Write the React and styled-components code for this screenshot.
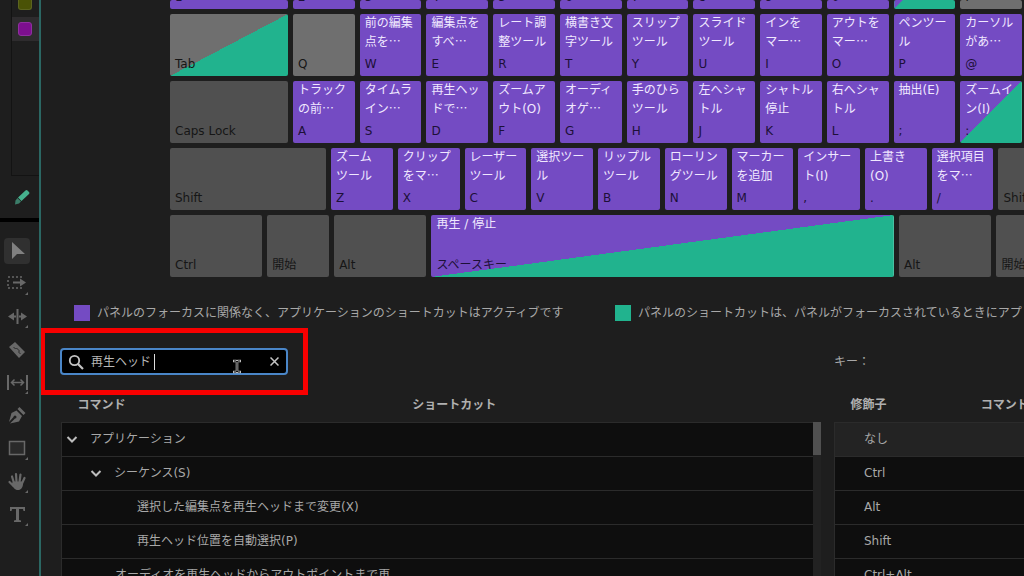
import React from "react";
import styled, { createGlobalStyle, css } from "styled-components";

const color = {
  bg: "#1e1e1e",
  purple: "#744bc3",
  teal: "#21b38e",
  assigned: "#6f6f6f",
  modifier: "#505050",
  text: "#a8a8a8",
  line: "#2b2b2b",
  well: "#0e0e0e",
};

const Global = createGlobalStyle`
  * { box-sizing: border-box; }
  body {
    margin: 0;
    background: ${color.bg};
    color: ${color.text};
    font: 12px/18px "DejaVu Sans", "Noto Sans CJK JP", sans-serif;
  }
  button, input { font: inherit; color: inherit; }
`;

const Page = styled.div`
  display: flex;
  height: 100vh;
  overflow: hidden;
`;

/* ---------- side bar ---------- */

const Side = styled.aside`
  flex: none;
  width: 41px;
  border-right: 2px solid #2b6763;
  display: flex;
  flex-direction: column;
`;

const LabelPanel = styled.div`
  height: 176px;
  margin-left: 11px;
  border: solid #131313;
  border-width: 0 0 1px 1px;
`;

const LabelRow = styled.div`
  height: ${(p) => (p.$selected ? 24 : 17)}px;
  display: flex;
  align-items: ${(p) => (p.$selected ? "center" : "flex-start")};
  padding-left: 6px;
  overflow: hidden;
  background: ${(p) => (p.$selected ? "#2e2c2e" : "transparent")};
`;

const LabelSwatch = styled.span`
  width: 14px;
  height: ${(p) => p.$height}px;
  border: 1px solid ${(p) => p.$edge};
  border-top-width: ${(p) => (p.$height < 14 ? 0 : 1)}px;
  border-radius: ${(p) => (p.$height < 14 ? "0 0 3px 3px" : "3px")};
  background: ${(p) => p.$fill};
`;

const PencilSlot = styled.div`
  height: 42px;
  display: flex;
  align-items: center;
  padding-left: 14px;
`;

const Tools = styled.nav`
  flex: 1;
  border-top: 4px solid #000;
  padding: 16px 4px 0;
  display: flex;
  flex-direction: column;
  gap: 7px;
`;

const ToolButton = styled.button`
  flex: none;
  width: 26px;
  height: 26px;
  padding: 0;
  border: 0;
  border-radius: 4px;
  display: grid;
  place-items: center;
  color: ${(p) => (p.$active ? "#808080" : "#686868")};
  background: ${(p) => (p.$active ? "#303030" : "transparent")};
`;

const Corner = () => <path d="M24 21v3h-3z" fill="currentColor" />;

const tools = [
  { name: "選択ツール", art: <path d="M8 4v17l5-5h8z" fill="currentColor" /> },
  {
    name: "トラックの前方選択ツール",
    art: (
      <>
        <path d="M4 6h2M8 6h2M12 6h2M16 6h2M4 17h2M8 17h2M12 17h2M16 17h2M4 9v2M4 13v2" stroke="currentColor" strokeWidth="1.500" />
        <path d="M9 10.500h7V7.500l6 4-6 4v-3H9z" fill="currentColor" />
        <Corner />
      </>
    ),
  },
  {
    name: "リップルツール",
    art: (
      <>
        <path d="M13.500 5v15" stroke="currentColor" strokeWidth="2" />
        <path d="M4 12.500l6-4v3h2v2h-2v3zM23 12.500l-6-4v3h-2v2h2v3z" fill="currentColor" />
        <Corner />
      </>
    ),
  },
  {
    name: "レーザーツール",
    art: (
      <>
        <path d="M5 10l6-5 10 10-6 6z" fill="currentColor" />
        <path d="M9.500 10l2 2 1-1 3 3-1 1 2 2" stroke="#2a2a2a" fill="none" />
      </>
    ),
  },
  {
    name: "スリップツール",
    art: (
      <>
        <path d="M4 5v15M23 5v15" stroke="currentColor" strokeWidth="2" />
        <path d="M8 12.500h11M10.500 9.500l-3 3 3 3M16.500 9.500l3 3-3 3" stroke="currentColor" strokeWidth="1.500" fill="none" />
        <Corner />
      </>
    ),
  },
  {
    name: "ペンツール",
    art: (
      <path
        d="M15.500 4l6 6-2 2-6-6zM12.500 7.500l5.500 5.500-3 5.500L6 20.500l5-5a1.500 1.500 0 1 0-1.500-1.500L5 19l2.500-9z"
        fill="currentColor"
      />
    ),
  },
  {
    name: "長方形ツール",
    art: (
      <>
        <path d="M5.500 5.500h15v13h-15z" stroke="currentColor" strokeWidth="1.500" fill="#2a2a2a" />
        <Corner />
      </>
    ),
  },
  {
    name: "手のひらツール",
    art: (
      <>
        <path
          d="M10 14L8 7.500M12.500 13L12 5M15.500 13L16.500 5.500M18 14.500L20.500 9M9.500 17L5.500 13"
          stroke="currentColor"
          strokeWidth="2.200"
          strokeLinecap="round"
        />
        <path d="M9 12.500h9.500l.5 2c0 4-2 6.500-5 6.500-3 0-4-1.500-6.500-5.500z" fill="currentColor" />
        <Corner />
      </>
    ),
  },
  {
    name: "文字ツール",
    art: (
      <>
        <path d="M6 5h15v4h-1.500l-.5-2h-4v11l2 .5V20h-7v-1.500l2-.5V7H8l-.5 2H6z" fill="currentColor" />
        <Corner />
      </>
    ),
  },
];

/* ---------- keyboard ---------- */

const Dialog = styled.main`
  flex: 1;
  min-width: 0;
  overflow: hidden;
`;

const Keyboard = styled.div`
  margin-left: 129px;
  min-width: 996px;
  display: flex;
  flex-direction: column;
  gap: 5px;
`;

const KeyRow = styled.div`
  display: flex;
  gap: 5px;
  height: ${(p) => (p.$cut ? 9 : 62)}px;
`;

const kinds = {
  app: css`background-color: ${color.purple};`,
  plain: css`background-color: ${color.assigned};`,
  mod: css`background-color: ${color.modifier};`,
  both: css`background-image: linear-gradient(to top left, ${color.teal} 50%, ${color.purple} 50%);`,
  panel: css`background-image: linear-gradient(to top left, ${color.teal} 50%, ${color.assigned} 50%);`,
  none: css`visibility: hidden;`,
};

/* The basis grows in step with the units, so that keys line up across the 5px gaps. */
const Key = styled.button`
  flex: ${(p) => p.$units} 0 ${(p) => Math.round(p.$units * 20 - 5)}px;
  min-width: 0;
  padding: 0 0 3px 5px;
  border: 0;
  border-radius: 2px;
  overflow: hidden;
  display: flex;
  flex-direction: column;
  justify-content: ${(p) => (p.$hasCommand ? "space-between" : "flex-end")};
  text-align: left;
  white-space: nowrap;
  background-size: 100% 62px;
  background-position: bottom;
  ${(p) => kinds[p.$kind]}
`;

const Command = styled.span`
  color: #f0e8ff;
  line-height: 19px;
`;

const Cap = styled.span`
  color: ${(p) => (p.$onGrey ? "#161616" : "#1d1038")};
`;

const Ellipsis = styled.span`
  font-family: "Noto Sans CJK JP", sans-serif;
  line-height: 1px;
`;

const withEllipsis = (line) =>
  line.endsWith("…") ? (
    <>
      {line.slice(0, -1)}
      <Ellipsis>…</Ellipsis>
    </>
  ) : (
    line
  );

// Each key: [cap, command lines, kind, width in key units]
const app = (cap, ...lines) => [cap, lines, "app", 1];
const mod = (cap, units) => [cap, [], "mod", units];

const rows = [
  [
    ["1", [], "app", 1.84],
    ...["2", "3", "4", "5", "6", "7", "8", "9", "0"].map((n) => app(n)),
    ["", [], "both", 1],
    [".", [], "plain", 1],
    ["", [], "none", 2.16],
  ],
  [
    ["Tab", [], "panel", 1.84],
    ["Q", [], "plain", 1],
    app("W", "前の編集", "点を…"),
    app("E", "編集点を", "すべ…"),
    app("R", "レート調", "整ツール"),
    app("T", "横書き文", "字ツール"),
    app("Y", "スリップ", "ツール"),
    app("U", "スライド", "ツール"),
    app("I", "インを", "マー…"),
    app("O", "アウトを", "マー…"),
    app("P", "ペンツー", "ル"),
    app("@", "カーソル", "があ…"),
    ["", [], "none", 2.16],
  ],
  [
    mod("Caps Lock", 1.84),
    app("A", "トラック", "の前…"),
    app("S", "タイムラ", "イン…"),
    app("D", "再生ヘッ", "ドで…"),
    app("F", "ズームア", "ウト(O)"),
    app("G", "オーディ", "オゲ…"),
    app("H", "手のひら", "ツール"),
    app("J", "左へシャ", "トル"),
    app("K", "シャトル", "停止"),
    app("L", "右へシャ", "トル"),
    app(";", "抽出(E)"),
    [":", ["ズームイ", "ン(I)"], "both", 1],
    ["", [], "none", 2.16],
  ],
  [
    mod("Shift", 2.42),
    app("Z", "ズーム", "ツール"),
    app("X", "クリップ", "をマ…"),
    app("C", "レーザー", "ツール"),
    app("V", "選択ツー", "ル"),
    app("B", "リップル", "ツール"),
    app("N", "ローリン", "グツール"),
    app("M", "マーカー", "を追加"),
    app(",", "インサー", "ト(I)"),
    app(".", "上書き", "(O)"),
    app("/", "選択項目", "をマ…"),
    mod("Shift", 2.58),
  ],
  [
    mod("Ctrl", 1.46),
    mod("開始", 1),
    mod("Alt", 1.46),
    ["スペースキー", ["再生 / 停止"], "both", 7],
    mod("Alt", 1.46),
    mod("開始", 1),
    ["", [], "none", 1.62],
  ],
];

/* ---------- legend and search ---------- */

const Legend = styled.div`
  display: flex;
  gap: 50px;
  margin: 28px 0 0 33px;
  white-space: nowrap;
`;

const LegendItem = styled.div`
  flex: none;
  display: flex;
  align-items: center;
  gap: 7px;
  height: 16px;
  min-width: 491px;
`;

const Swatch = styled.span`
  width: 16px;
  height: 16px;
  background: ${(p) => p.$fill};
`;

const Columns = styled.div`
  display: grid;
  grid-template-columns: 4fr 1fr;
  column-gap: 13px;
  margin: 13px 0 0 20px;
`;

const SearchRow = styled(Columns)`
  margin-top: 27px;
  align-items: center;
`;

const SearchBox = styled.div`
  position: relative;
  width: 228px;
  height: 27px;
  display: flex;
  align-items: center;
  gap: 7px;
  padding: 0 7px 0 6px;
  margin-left: -1px;
  border: 2px solid #4a86c8;
  border-radius: 4px;
  background: #000;
  color: #c4c4c4;
`;

const SearchInput = styled.input`
  flex: 1;
  min-width: 0;
  padding: 0;
  border: 0;
  outline: 0;
  background: none;
  color: #b8b8b8;
`;

const ClearButton = styled.button`
  padding: 0;
  border: 0;
  background: none;
  display: flex;
`;

const Highlight = styled.span`
  position: absolute;
  inset: -22px;
  border: 5px solid #f80000;
  pointer-events: none;
`;

const Caret = styled.span`
  position: absolute;
  left: 92px;
  top: 4px;
  width: 1px;
  height: 16px;
  background: #ddd;
`;

const Pointer = styled.svg`
  position: absolute;
  left: 170px;
  top: 9px;
`;

/* ---------- tables ---------- */

const TablePane = styled.div`
  position: relative;
  min-width: 0;
  padding-right: ${(p) => (p.$scroll ? 8 : 0)}px;
`;

const Table = styled.table`
  width: 100%;
  table-layout: fixed;
  border-collapse: collapse;
  white-space: nowrap;
`;

const Head = styled.th`
  width: ${(p) => p.$width};
  height: 34px;
  padding: 0 0 0 ${(p) => p.$pad}px;
  text-align: left;
  font-weight: bold;
  color: #b0b0b0;
`;

const Cell = styled.td`
  height: 34px;
  padding: 0 0 0 ${(p) => p.$pad}px;
  border: solid ${color.line};
  border-width: 1px 0;
  background: ${(p) => (p.$selected ? "#232323" : color.well)};
  &:first-child { border-left-width: 1px; }
`;

const Toggle = styled.button`
  display: flex;
  align-items: center;
  gap: 12px;
  padding: 0;
  border: 0;
  background: none;
`;

const ScrollTrack = styled.div`
  position: absolute;
  top: 34px;
  right: 0;
  bottom: 0;
  width: 8px;
  background: #222;
`;

const ScrollThumb = styled.div`
  height: 33px;
  background: #505050;
`;

const Chevron = () => (
  <svg width="12" height="12" viewBox="0 0 12 12" fill="none" stroke="#bdbdbd" strokeWidth="2">
    <path d="M1.500 4L6 8.500 10.500 4" />
  </svg>
);

const commands = [
  { text: "アプリケーション", pad: 4, group: true },
  { text: "シーケンス(S)", pad: 28, group: true },
  { text: "選択した編集点を再生ヘッドまで変更(X)", pad: 75 },
  { text: "再生ヘッド位置を自動選択(P)", pad: 75 },
  { text: "オーディオを再生ヘッドからアウトポイントまで再", pad: 53 },
];

const modifiers = ["なし", "Ctrl", "Alt", "Shift", "Ctrl+Alt"];

export default function App() {
  return (
    <Page lang="ja">
      <Global />
      <Side>
        <LabelPanel>
          <LabelRow>
            <LabelSwatch $height={10} $fill="#4a5206" $edge="#5c6420" />
          </LabelRow>
          <LabelRow $selected>
            <LabelSwatch $height={14} $fill="#7d0f8f" $edge="#8f2f9f" />
          </LabelRow>
        </LabelPanel>
        <PencilSlot>
          <svg width="16" height="16" viewBox="0 0 16 16">
            <path d="M11.500 1.500Q12.500 .5 13.500 1.500L15 3Q16 4 15 5L7.500 12 4 8.500z" fill="#46b28e" />
            <path d="M3.500 9L7 12.500 5 14.500 1 15.500 1.500 11.500z" fill="#3b7d69" />
          </svg>
        </PencilSlot>
        <Tools>
          {tools.map((tool, i) => (
            <ToolButton key={tool.name} $active={i === 0} aria-label={tool.name}>
              <svg width="26" height="26" viewBox="0 0 26 26" fill="none">
                {tool.art}
              </svg>
            </ToolButton>
          ))}
        </Tools>
      </Side>

      <Dialog>
        <Keyboard>
          {rows.map((row, r) => (
            <KeyRow key={r} $cut={r === 0}>
              {row.map(([cap, lines, kind, units], k) => (
                <Key key={k} $kind={kind} $units={units} $hasCommand={lines.length > 0}>
                  {lines.length > 0 && (
                    <Command>
                      {lines.map((line, i) => (
                        <React.Fragment key={i}>
                          {i > 0 && <br />}
                          {withEllipsis(line)}
                        </React.Fragment>
                      ))}
                    </Command>
                  )}
                  <Cap $onGrey={kind === "mod" || kind === "plain" || kind === "panel"}>{cap}</Cap>
                </Key>
              ))}
            </KeyRow>
          ))}
        </Keyboard>

        <Legend>
          <LegendItem>
            <Swatch $fill={color.purple} />
            パネルのフォーカスに関係なく、アプリケーションのショートカットはアクティブです
          </LegendItem>
          <LegendItem>
            <Swatch $fill={color.teal} />
            パネルのショートカットは、パネルがフォーカスされているときにアプ
          </LegendItem>
        </Legend>

        <SearchRow>
          <SearchBox>
            <svg width="16" height="16" viewBox="0 0 16 16" fill="none" stroke="currentColor" strokeWidth="1.800">
              <circle cx="6.500" cy="6.500" r="4.700" />
              <path d="M10 10l5 5" strokeWidth="2.200" />
            </svg>
            <SearchInput aria-label="検索" defaultValue="再生ヘッド" />
            <ClearButton aria-label="クリア">
              <svg width="9" height="9" viewBox="0 0 9 9" stroke="currentColor" strokeWidth="1.500">
                <path d="M.5.5l8 8M8.500.5l-8 8" />
              </svg>
            </ClearButton>
            <Caret />
            <Pointer width="10" height="15" viewBox="0 0 10 15" fill="none">
              <path d="M1 2h3l1 1 1-1h3M5 3v9M1 13h3l1-1 1 1h3" stroke="#bbb" strokeWidth="2.600" />
              <path d="M2 2h2l1 1 1-1h2M5 3v9M2 13h2l1-1 1 1h2" stroke="#111" strokeWidth="1" />
            </Pointer>
            <Highlight />
          </SearchBox>
          <span>キー：</span>
        </SearchRow>

        <Columns>
          <TablePane $scroll>
            <Table>
              <thead>
                <tr>
                  <Head $width="46%" $pad={16}>コマンド</Head>
                  <Head $pad={5}>ショートカット</Head>
                </tr>
              </thead>
              <tbody>
                {commands.map((c) => (
                  <tr key={c.text}>
                    <Cell $pad={c.pad}>
                      {c.group ? (
                        <Toggle aria-expanded="true">
                          <Chevron />
                          {c.text}
                        </Toggle>
                      ) : (
                        c.text
                      )}
                    </Cell>
                    <Cell $pad={5} />
                  </tr>
                ))}
              </tbody>
            </Table>
            <ScrollTrack>
              <ScrollThumb />
            </ScrollTrack>
          </TablePane>
          <TablePane>
            <Table>
              <thead>
                <tr>
                  <Head $width="75%" $pad={16}>修飾子</Head>
                  <Head $pad={4}>コマンド</Head>
                </tr>
              </thead>
              <tbody>
                {modifiers.map((m, i) => (
                  <tr key={m}>
                    <Cell $pad={29} $selected={i === 0}>{m}</Cell>
                    <Cell $pad={4} $selected={i === 0} />
                  </tr>
                ))}
              </tbody>
            </Table>
          </TablePane>
        </Columns>
      </Dialog>
    </Page>
  );
}
